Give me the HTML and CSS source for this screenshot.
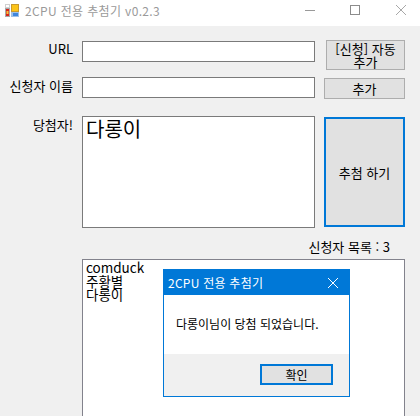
FILE: index.html
```html
<!DOCTYPE html>
<html lang="ko">
<head>
    <meta charset="UTF-8">
    <meta name="viewport" content="width=device-width, initial-scale=1.0">
    <title>2CPU 전용 추첨기 v0.2.3</title>
    <link rel="stylesheet" href="styles.css">
</head>
<body>
    <div class="window">
        <div class="titlebar">
            <svg class="app-icon" width="14" height="14" viewBox="0 0 14 14">
                <rect x="0.5" y="0.5" width="4" height="3" fill="#fff" stroke="#d0d0d0"/>
                <rect x="0.5" y="4.5" width="4" height="8" fill="#d8261c" stroke="#a8a8a8"/>
                <rect x="1.5" y="7" width="2" height="3" fill="#f6c23a"/>
                <rect x="6" y="0" width="8" height="8" fill="#c99a2e"/>
                <rect x="7" y="1" width="6" height="6" fill="#fcc419"/>
                <rect x="6" y="8" width="8" height="5" fill="#9cc0ea"/>
                <rect x="8" y="9" width="5" height="3" fill="#3f86dc"/>
            </svg>
            <span class="app-title">2CPU 전용 추첨기 v0.2.3</span>
            <div class="caption-buttons">
                <svg class="caption-btn" width="46" height="21" viewBox="0 0 46 21"><path d="M19 10.5h10" stroke="#999" fill="none"/></svg>
                <svg class="caption-btn" width="46" height="21" viewBox="0 0 46 21"><rect x="18.5" y="5.5" width="9" height="9" stroke="#8c8c8c" fill="none"/></svg>
                <svg class="caption-btn" width="46" height="21" viewBox="0 0 46 21"><path d="M18 5l10 10M28 5L18 15" stroke="#a8a8a8" fill="none"/></svg>
            </div>
        </div>

        <div class="form">
            <div class="row row-url">
                <label class="field-label">URL</label>
                <input class="field" type="text">
                <button class="btn btn-auto">[신청] 자동<br>추가</button>
            </div>
            <div class="row row-name">
                <label class="field-label">신청자 이름</label>
                <input class="field" type="text">
                <button class="btn btn-add">추가</button>
            </div>
            <div class="row row-winner">
                <label class="field-label">당첨자!</label>
                <div class="winner-box">다롱이</div>
                <button class="btn btn-draw">추첨 하기</button>
            </div>
            <div class="count">신청자 목록 : 3</div>
            <div class="list">
                <div>comduck</div>
                <div>주황별</div>
                <div>다롱이</div>
            </div>
        </div>

        <div class="dialog">
            <div class="dialog-title">
                <span>2CPU 전용 추첨기</span>
                <svg width="12" height="12" viewBox="0 0 12 12"><path d="M1 1l10 10M11 1L1 11" stroke="#fff" fill="none"/></svg>
            </div>
            <div class="dialog-body">다롱이님이 당첨 되었습니다.</div>
            <div class="dialog-footer">
                <button class="btn btn-ok">확인</button>
            </div>
        </div>
    </div>
</body>
</html>
```

FILE: styles.css
```css
* {
    margin: 0;
    padding: 0;
    box-sizing: border-box;
    font-family: 'Noto Sans CJK KR', 'DejaVu Sans', sans-serif;
}

body {
    background: #f0f0f0;
}

.window {
    position: relative;
    width: 420px;
    height: 416px;
    overflow: hidden;
    background: #f0f0f0;
    color: #000;
    font-size: 13px;
}

.titlebar {
    display: flex;
    align-items: center;
    height: 26px;
    padding: 0 0 5px 5px;
    background: #fff;
}

.app-icon {
    margin-right: 6px;
}

.app-title {
    color: #9a9a9a;
    font-size: 12px;
    letter-spacing: 0.35px;
}

.caption-buttons {
    display: flex;
    margin-left: auto;
    margin-right: -4px;
}

.form {
    display: flex;
    flex-direction: column;
    padding: 14px 15px 0 0;
}

.row {
    display: flex;
    align-items: flex-start;
}

.row-url {
    height: 37px;
}

.row-name {
    height: 39px;
}

.row-winner {
    height: 112px;
}

.field-label {
    width: 73px;
    margin-right: 9px;
    text-align: right;
    line-height: 18px;
}

.field {
    width: 233px;
    height: 21px;
    border: 1px solid #7a7a7a;
    background: #fff;
    outline: none;
}

.row-url .field {
    margin-top: 1px;
}

.btn {
    margin-left: auto;
    border: 1px solid #adadad;
    background: #e1e1e1;
    color: #000;
    font-size: 13px;
    line-height: 13px;
}

.btn-auto {
    width: 79px;
    height: 30px;
}

.btn-add {
    width: 81px;
    height: 21px;
    margin-top: 1px;
}

.winner-box {
    width: 233px;
    height: 112px;
    padding: 0 3px;
    border: 1px solid #7a7a7a;
    background: #fff;
    font-size: 20px;
    line-height: 23px;
}

.btn-draw {
    width: 81px;
    height: 110px;
    margin-top: 1px;
    border: 2px solid #0078d7;
}

.count {
    height: 31px;
    padding-right: 15px;
    text-align: right;
    line-height: 38px;
}

.list {
    height: 170px;
    margin-left: 82px;
    padding: 1px 3px;
    border: 1px solid #82828c;
    background: #fff;
    font-size: 13.5px;
    line-height: 13.5px;
}

.dialog {
    position: absolute;
    left: 163px;
    top: 269px;
    display: flex;
    flex-direction: column;
    width: 187px;
    height: 128px;
    border: 1px solid #0078d7;
    background: #fff;
    font-size: 12px;
}

.dialog-title {
    display: flex;
    align-items: center;
    justify-content: space-between;
    height: 25px;
    padding: 0 10px 0 4px;
    background: #0078d7;
    color: #fff;
    letter-spacing: 0.25px;
}

.dialog-body {
    height: 59px;
    padding-left: 12px;
    line-height: 58px;
}

.dialog-footer {
    display: flex;
    flex: 1;
    padding: 10px 16px 0 0;
    background: #f0f0f0;
}

.btn-ok {
    width: 73px;
    height: 21px;
    border: 2px solid #0078d7;
    font-size: 12px;
}
```
